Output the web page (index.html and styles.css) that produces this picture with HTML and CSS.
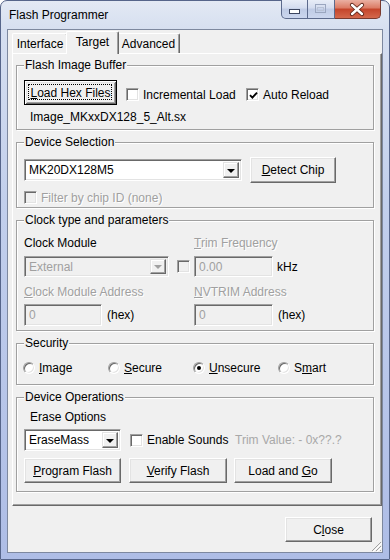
FILE: index.html
```html
<!DOCTYPE html>
<html>
	<head>
		<meta charset="UTF-8">
		<title>Flash Programmer</title>
		<link rel="stylesheet" href="styles.css">
	</head>
	<body>
		<div class="window">
			<div class="titlebar">
				<span class="title">Flash Programmer</span>
				<div class="controls">
					<span class="ctl min">
						<svg width="27" height="19" viewBox="0 0 27 19"><rect x="8.5" y="9.5" width="10" height="4" fill="#fff" stroke="#3c4660"/></svg>
					</span>
					<span class="ctl max">
						<svg width="27" height="19" viewBox="0 0 27 19"><rect x="8.5" y="4.5" width="10" height="8" fill="none" stroke="#9aa6bf"/><rect x="10.5" y="7.5" width="6" height="3" fill="none" stroke="#b8c2d6"/></svg>
					</span>
					<span class="ctl close">
						<svg width="46" height="19" viewBox="0 0 46 19"><path d="M18 5 L28 14 M28 5 L18 14" stroke="#5b2418" stroke-width="4.2" stroke-linecap="round"/><path d="M18 5 L28 14 M28 5 L18 14" stroke="#fff" stroke-width="2.4" stroke-linecap="round"/></svg>
					</span>
				</div>
			</div>
			<div class="client">
				<div class="tabs">
					<span class="tab t-int">Interface</span>
					<span class="tab sel t-tgt">Target</span>
					<span class="tab t-adv">Advanced</span>
				</div>
				<div class="panel">
					<fieldset class="grp g-buf">
						<legend>Flash Image Buffer</legend>
						<div class="row r-load">
							<span class="btn default w-load"><span><u>L</u>oad Hex Files</span></span>
							<label class="chk w-inc"><span class="box"></span><span>Incremental Load</span></label>
							<label class="chk"><span class="box"><svg width="9" height="9" viewBox="0 0 9 9"><path d="M1 4.2 L3.4 6.6 L8 1.6" fill="none" stroke="#000" stroke-width="1.9"/></svg></span><span>Auto Reload</span></label>
						</div>
						<div class="file">Image_MKxxDX128_5_Alt.sx</div>
					</fieldset>

					<fieldset class="grp g-dev">
						<legend>Device Selection</legend>
						<div class="row r-dev">
							<span class="combo w-dev"><span class="val">MK20DX128M5</span><span class="drop"><span class="tri"></span></span></span>
							<span class="btn w-detect"><span><u>D</u>etect Chip</span></span>
						</div>
						<div class="row r-filter">
							<label class="chk dis"><span class="box"></span><span>Filter by chip ID (none)</span></label>
						</div>
					</fieldset>

					<fieldset class="grp g-clk">
						<legend>Clock type and parameters</legend>
						<div class="lbls">
							<span class="c1">Clock Module</span>
							<span class="dis"><u>T</u>rim Frequency</span>
						</div>
						<div class="row r-clk">
							<div class="c1 cell">
								<span class="combo off w-ext"><span class="val">External</span><span class="drop"><span class="tri"></span></span></span>
								<span class="box off cb-trim"></span>
							</div>
							<span class="edit w-num">0.00</span>
							<span class="unit">kHz</span>
						</div>
						<div class="lbls l-addr">
							<span class="c1 dis"><u>C</u>lock Module Address</span>
							<span class="dis"><u>N</u>VTRIM Address</span>
						</div>
						<div class="row r-addr">
							<div class="c1 cell">
								<span class="edit w-hex">0</span>
								<span class="unit">(hex)</span>
							</div>
							<span class="edit w-num">0</span>
							<span class="unit">(hex)</span>
						</div>
					</fieldset>

					<fieldset class="grp g-sec">
						<legend>Security</legend>
						<div class="row r-sec">
							<label class="radio"><span class="dot"></span><span><u>I</u>mage</span></label>
							<label class="radio"><span class="dot"></span><span><u>S</u>ecure</span></label>
							<label class="radio"><span class="dot on"></span><span><u>U</u>nsecure</span></label>
							<label class="radio"><span class="dot"></span><span>S<u>m</u>art</span></label>
						</div>
					</fieldset>

					<fieldset class="grp g-ops">
						<legend>Device Operations</legend>
						<div class="erase-lbl">Erase Options</div>
						<div class="row r-erase">
							<span class="combo w-erase"><span class="val">EraseMass</span><span class="drop"><span class="tri"></span></span></span>
							<label class="chk w-snd"><span class="box"></span><span>Enable Sounds</span></label>
							<span class="trim">Trim Value: - 0x??.?</span>
						</div>
						<div class="row r-ops">
							<span class="btn w-prog"><span><u>P</u>rogram Flash</span></span>
							<span class="btn w-ver"><span><u>V</u>erify Flash</span></span>
							<span class="btn w-go"><span>Load and <u>G</u>o</span></span>
						</div>
					</fieldset>
				</div>
				<div class="footer">
					<span class="btn w-close"><span>C<u>l</u>ose</span></span>
				</div>
				<svg class="grip" width="12" height="12" viewBox="0 0 12 12">
					<path d="M11 2 L2 11 M11 6 L6 11 M11 10 L10 11" stroke="#a0a0a0" stroke-width="1"/>
					<path d="M12 3 L3 12 M12 7 L7 12" stroke="#fff" stroke-width="1"/>
				</svg>
			</div>
		</div>
	</body>
</html>
```

FILE: styles.css
```css
*{margin: 0;padding: 0;box-sizing: border-box;}
body{font-size: 12px;font-family: "Liberation Sans", Arial, sans-serif;color: #000;background: #fff;}
u{text-decoration: underline;text-underline-offset: 1px;}

.window{
	width: 390px;
	height: 560px;
	border: 1px solid #56658a;
	border-radius: 7px 7px 0 0;
	padding: 0 6px 6px;
	background: linear-gradient(#e3e9f4 0, #d6dff0 28px, #c2cfec 200px, #aebde6 100%);
	display: flex;
	flex-direction: column;
}
.titlebar{
	height: 28px;
	display: flex;
	align-items: center;
	padding-left: 2px;
}
.title{font-size: 12px;color: #000;}
.controls{
	margin-left: auto;
	margin-right: 2px;
	align-self: flex-start;
	margin-top: -1px;
	display: flex;
	height: 19px;
}
.ctl{display: block;height: 19px;border: 1px solid #5c6a8c;border-top: 0;}
.ctl svg{display: block;margin: 0 -1px;}
.min{
	width: 27px;
	border-radius: 0 0 0 5px;
	background: linear-gradient(#e8edf7 0, #d3dcef 45%, #bfcbe5 50%, #cbd6ee 100%);
}
.max{
	width: 27px;
	border-left: 0;
	background: linear-gradient(#e8edf7 0, #d3dcef 45%, #bfcbe5 50%, #cbd6ee 100%);
}
.close{
	width: 46px;
	border-left: 0;
	border-color: #7a3a2e;
	border-radius: 0 0 5px 0;
	background: linear-gradient(#eab0a2 0, #db7a63 45%, #c4442a 50%, #d4684c 100%);
}

.client{
	flex: 1;
	background: #f0f0f0;
	border: 1px solid #7d889f;
	position: relative;
}
.grip{position: absolute;right: 0;bottom: 0;}

.tabs{
	display: flex;
	align-items: flex-end;
	height: 22px;
	margin-top: 1px;
	padding-left: 4px;
}
.tab{
	height: 20px;
	display: flex;
	align-items: center;
	justify-content: center;
	border-top: 1px solid #fff;
	border-left: 1px solid #fff;
	border-right: 1px solid #696969;
	border-radius: 2px 2px 0 0;
	box-shadow: inset -1px 0 #a0a0a0;
	background: #f0f0f0;
	padding-top: 1px;
}
.t-int{width: 56px;}
.t-tgt{width: 53px;}
.t-adv{width: 63px;}
.tab.sel{
	height: 23px;
	margin: 0 -2px -1px;
	position: relative;
	z-index: 1;
	padding-top: 0;
	padding-bottom: 2px;
}

.panel{
	width: 370px;
	height: 453px;
	margin-left: 4px;
	border: 1px solid;
	border-color: #fff #696969 #696969 #fff;
	box-shadow: inset -1px -1px #a0a0a0;
	padding: 4px 7px 0 3px;
	display: flex;
	flex-direction: column;
	gap: 5px;
}

.grp{
	width: 358px;
	border: 1px solid #a0a0a0;
	box-shadow: 1px 1px 0 #fff, inset 1px 1px 0 #fff;
	padding: 0 7px;
	min-width: 0;
}
.grp legend{
	padding: 0 1px;
	line-height: 14px;
	background: #f0f0f0;
}
.g-buf{height: 72px;}
.g-dev{height: 73px;}
.g-clk{height: 118px;}
.g-sec{height: 49px;}
.g-ops{height: 102px;}

.row{display: flex;align-items: center;}
.dis{color: #a0a0a0;text-shadow: 1px 1px 0 #fff;}

/* buttons */
.btn{
	display: flex;
	align-items: center;
	justify-content: center;
	height: 25px;
	background: #f0f0f0;
	border: 1px solid;
	border-color: #fff #696969 #696969 #fff;
	box-shadow: inset -1px -1px #a0a0a0, inset 1px 1px #e3e3e3;
	position: relative;
	white-space: nowrap;
}
.btn.default{
	border: 1px solid #000;
	box-shadow: inset 1px 1px #fff, inset -1px -1px #696969, inset 2px 2px #e3e3e3, inset -2px -2px #a0a0a0;
}
.btn.default::after{
	content: "";
	position: absolute;
	left: 3px;
	right: 4px;
	top: 3px;
	bottom: 4px;
	border: 1px dotted #000;
}

/* checkboxes */
.chk{display: flex;align-items: center;height: 15px;white-space: nowrap;}
.box{
	width: 13px;
	height: 13px;
	flex: none;
	margin-right: 4px;
	background: #fff;
	border: 1px solid;
	border-color: #a0a0a0 #fff #fff #a0a0a0;
	box-shadow: inset 1px 1px #696969, inset -1px -1px #e3e3e3;
	display: flex;
	align-items: center;
	justify-content: center;
	padding: 1px 0 0 1px;
}
.chk.dis .box,.box.off{background: #f0f0f0;}

/* radios */
.radio{display: flex;align-items: center;width: 85px;height: 14px;}
.dot{
	width: 12px;
	height: 12px;
	flex: none;
	margin-right: 4px;
	border-radius: 50%;
	background: #fff;
	border: 1px solid;
	border-color: #a0a0a0 #fff #fff #a0a0a0;
	box-shadow: inset 1px 1px #696969, inset -1px -1px #e3e3e3;
	display: flex;
	align-items: center;
	justify-content: center;
}
.dot.on::after{
	content: "";
	width: 4px;
	height: 4px;
	border-radius: 50%;
	background: #000;
}

/* combos and edits */
.combo,.edit{
	display: flex;
	align-items: center;
	background: #fff;
	border: 1px solid;
	border-color: #a0a0a0 #fff #fff #a0a0a0;
	box-shadow: inset 1px 1px #696969, inset -1px -1px #e3e3e3;
	padding: 2px;
}
.combo .val{flex: 1;padding-left: 2px;}
.drop{
	width: 16px;
	height: 100%;
	background: #f0f0f0;
	border: 1px solid;
	border-color: #e3e3e3 #696969 #696969 #e3e3e3;
	box-shadow: inset -1px -1px #a0a0a0, inset 1px 1px #fff;
	display: flex;
	align-items: center;
	justify-content: center;
}
.tri{
	width: 0;
	height: 0;
	border-left: 4px solid transparent;
	border-right: 4px solid transparent;
	border-top: 4px solid #000;
	margin-top: 1px;
}
.combo.off,.edit{background: #f0f0f0;color: #a0a0a0;}
.combo.off .tri{border-top-color: #a0a0a0;}
.edit{padding-left: 4px;}

/* flash image buffer */
.r-load{height: 25px;margin-top: 8px;}
.r-load .chk{margin-top: 4px;}
.w-load{width: 93px;margin-right: 9px;}
.w-inc{width: 120px;}
.file{margin-top: 5px;line-height: 14px;padding-left: 6px;}

/* device selection */
.r-dev{height: 26px;margin-top: 8px;}
.w-dev{width: 218px;height: 22px;margin-right: 8px;}
.w-detect{width: 86px;height: 26px;}
.r-filter{margin-top: 7px;height: 15px;}

/* clock */
.lbls{display: flex;line-height: 14px;margin-top: 9px;}
.c1{width: 170px;flex: none;}
.cell{display: flex;align-items: center;}
.r-clk{height: 21px;margin-top: 6px;}
.w-ext{width: 147px;height: 21px;}
.cb-trim{margin-left: 8px;}
.w-num{width: 79px;height: 21px;}
.unit{margin-left: 4px;}
.l-addr{margin-top: 8px;}
.r-addr{height: 22px;margin-top: 5px;}
.r-addr .edit{height: 22px;}
.w-hex{width: 78px;}
.r-addr .unit{margin-left: 5px;}

/* security */
.r-sec{margin-top: 11px;height: 14px;margin-left: -1px;}

/* device operations */
.erase-lbl{margin-top: 6px;line-height: 14px;padding-left: 6px;}
.r-erase{height: 22px;margin-top: 5px;}
.w-erase{width: 97px;height: 22px;margin-right: 9px;}
.w-snd{width: 105px;}
.trim{color: #a8a8a8;}
.r-ops{height: 25px;margin-top: 7px;}
.w-prog{width: 97px;margin-right: 8px;}
.w-ver{width: 98px;margin-right: 7px;}
.w-go{width: 98px;}

.footer{
	display: flex;
	justify-content: flex-end;
	padding-right: 10px;
	margin-top: 11px;
}
.w-close{width: 87px;}
```
